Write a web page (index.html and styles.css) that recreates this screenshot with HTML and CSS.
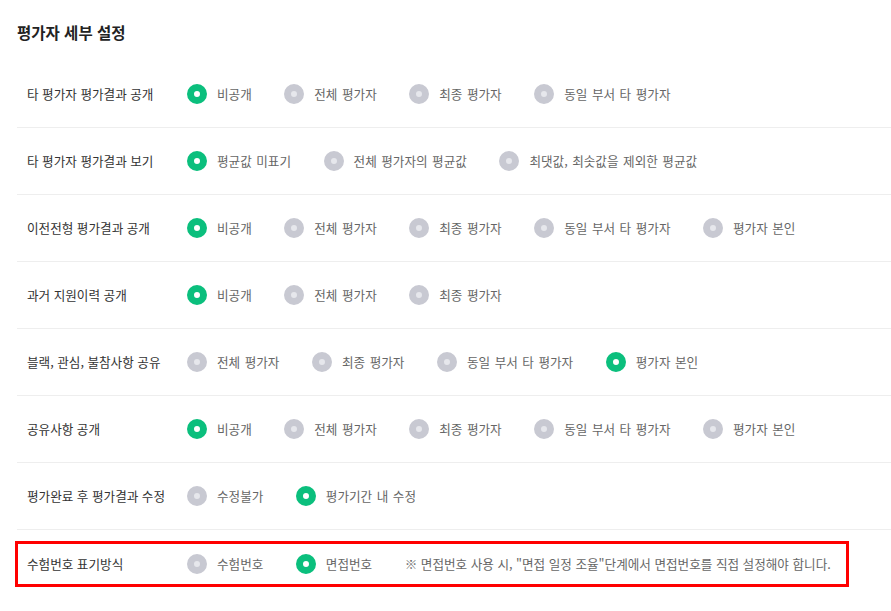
FILE: index.html
```html
<!DOCTYPE html>
<html lang="ko">
<head>
<meta charset="utf-8">
<link rel="stylesheet" href="styles.css">
</head>
<body>
<div class="panel">
  <h2 class="title">평가자 세부 설정</h2>

  <div class="row">
    <div class="label">타 평가자 평가결과 공개</div>
    <div class="opts">
      <span class="opt on"><i class="radio"></i>비공개</span>
      <span class="opt"><i class="radio"></i>전체 평가자</span>
      <span class="opt"><i class="radio"></i>최종 평가자</span>
      <span class="opt"><i class="radio"></i>동일 부서 타 평가자</span>
    </div>
  </div>

  <div class="row">
    <div class="label">타 평가자 평가결과 보기</div>
    <div class="opts">
      <span class="opt on"><i class="radio"></i>평균값 미표기</span>
      <span class="opt"><i class="radio"></i>전체 평가자의 평균값</span>
      <span class="opt"><i class="radio"></i>최댓값, 최솟값을 제외한 평균값</span>
    </div>
  </div>

  <div class="row">
    <div class="label">이전전형 평가결과 공개</div>
    <div class="opts">
      <span class="opt on"><i class="radio"></i>비공개</span>
      <span class="opt"><i class="radio"></i>전체 평가자</span>
      <span class="opt"><i class="radio"></i>최종 평가자</span>
      <span class="opt"><i class="radio"></i>동일 부서 타 평가자</span>
      <span class="opt"><i class="radio"></i>평가자 본인</span>
    </div>
  </div>

  <div class="row">
    <div class="label">과거 지원이력 공개</div>
    <div class="opts">
      <span class="opt on"><i class="radio"></i>비공개</span>
      <span class="opt"><i class="radio"></i>전체 평가자</span>
      <span class="opt"><i class="radio"></i>최종 평가자</span>
    </div>
  </div>

  <div class="row">
    <div class="label">블랙, 관심, 불참사항 공유</div>
    <div class="opts">
      <span class="opt"><i class="radio"></i>전체 평가자</span>
      <span class="opt"><i class="radio"></i>최종 평가자</span>
      <span class="opt"><i class="radio"></i>동일 부서 타 평가자</span>
      <span class="opt on"><i class="radio"></i>평가자 본인</span>
    </div>
  </div>

  <div class="row">
    <div class="label">공유사항 공개</div>
    <div class="opts">
      <span class="opt on"><i class="radio"></i>비공개</span>
      <span class="opt"><i class="radio"></i>전체 평가자</span>
      <span class="opt"><i class="radio"></i>최종 평가자</span>
      <span class="opt"><i class="radio"></i>동일 부서 타 평가자</span>
      <span class="opt"><i class="radio"></i>평가자 본인</span>
    </div>
  </div>

  <div class="row">
    <div class="label">평가완료 후 평가결과 수정</div>
    <div class="opts">
      <span class="opt"><i class="radio"></i>수정불가</span>
      <span class="opt on"><i class="radio"></i>평가기간 내 수정</span>
    </div>
  </div>

  <div class="row last">
    <div class="highlight">
      <div class="label">수험번호 표기방식</div>
      <div class="opts">
        <span class="opt"><i class="radio"></i>수험번호</span>
        <span class="opt on"><i class="radio"></i>면접번호</span>
        <span class="note">※ 면접번호 사용 시, "면접 일정 조율"단계에서 면접번호를 직접 설정해야 합니다.</span>
      </div>
    </div>
  </div>
</div>
</body>
</html>
```
FILE: styles.css
```css
* { box-sizing: border-box; }
html, body {
  margin: 0;
  padding: 0;
  background: #ffffff;
}
body {
  font-family: "Noto Sans CJK KR", "Noto Sans", sans-serif;
  color: #333333;
  overflow: hidden;
}
.panel {
  padding-left: 17px;
  width: 920px;
}
.title {
  margin: 21px 0 18px 0;
  font-size: 15.5px;
  line-height: 22px;
  font-weight: 700;
  color: #222222;
}
.row {
  display: flex;
  align-items: center;
  height: 67px;
  padding-left: 10px;
  border-bottom: 1px solid #eeeeee;
}
.row.last {
  border-bottom: none;
  padding-left: 0;
  margin-left: -2px;
}
.highlight {
  display: flex;
  align-items: center;
  width: 834px;
  height: 46px;
  border: 3px solid #ff0000;
  padding-left: 9px;
}
.label {
  width: 160px;
  flex: none;
  font-size: 12.6px;
  line-height: 20px;
  color: #333333;
}
.opts {
  display: flex;
  align-items: center;
}
.opt {
  display: flex;
  align-items: center;
  margin-right: 32.5px;
  font-size: 12.6px;
  line-height: 20px;
  word-spacing: 1px;
  color: #666666;
  white-space: nowrap;
}
.radio {
  display: block;
  width: 20px;
  height: 20px;
  border-radius: 50%;
  background: #e6e7ec;
  border: 7px solid #c8c9d2;
  margin-right: 10px;
  flex: none;
}
.opt.on .radio {
  background: #ffffff;
  border-color: #0bbf7d;
}
.note {
  font-size: 12.6px;
  line-height: 20px;
  color: #666666;
  white-space: nowrap;
}
```
